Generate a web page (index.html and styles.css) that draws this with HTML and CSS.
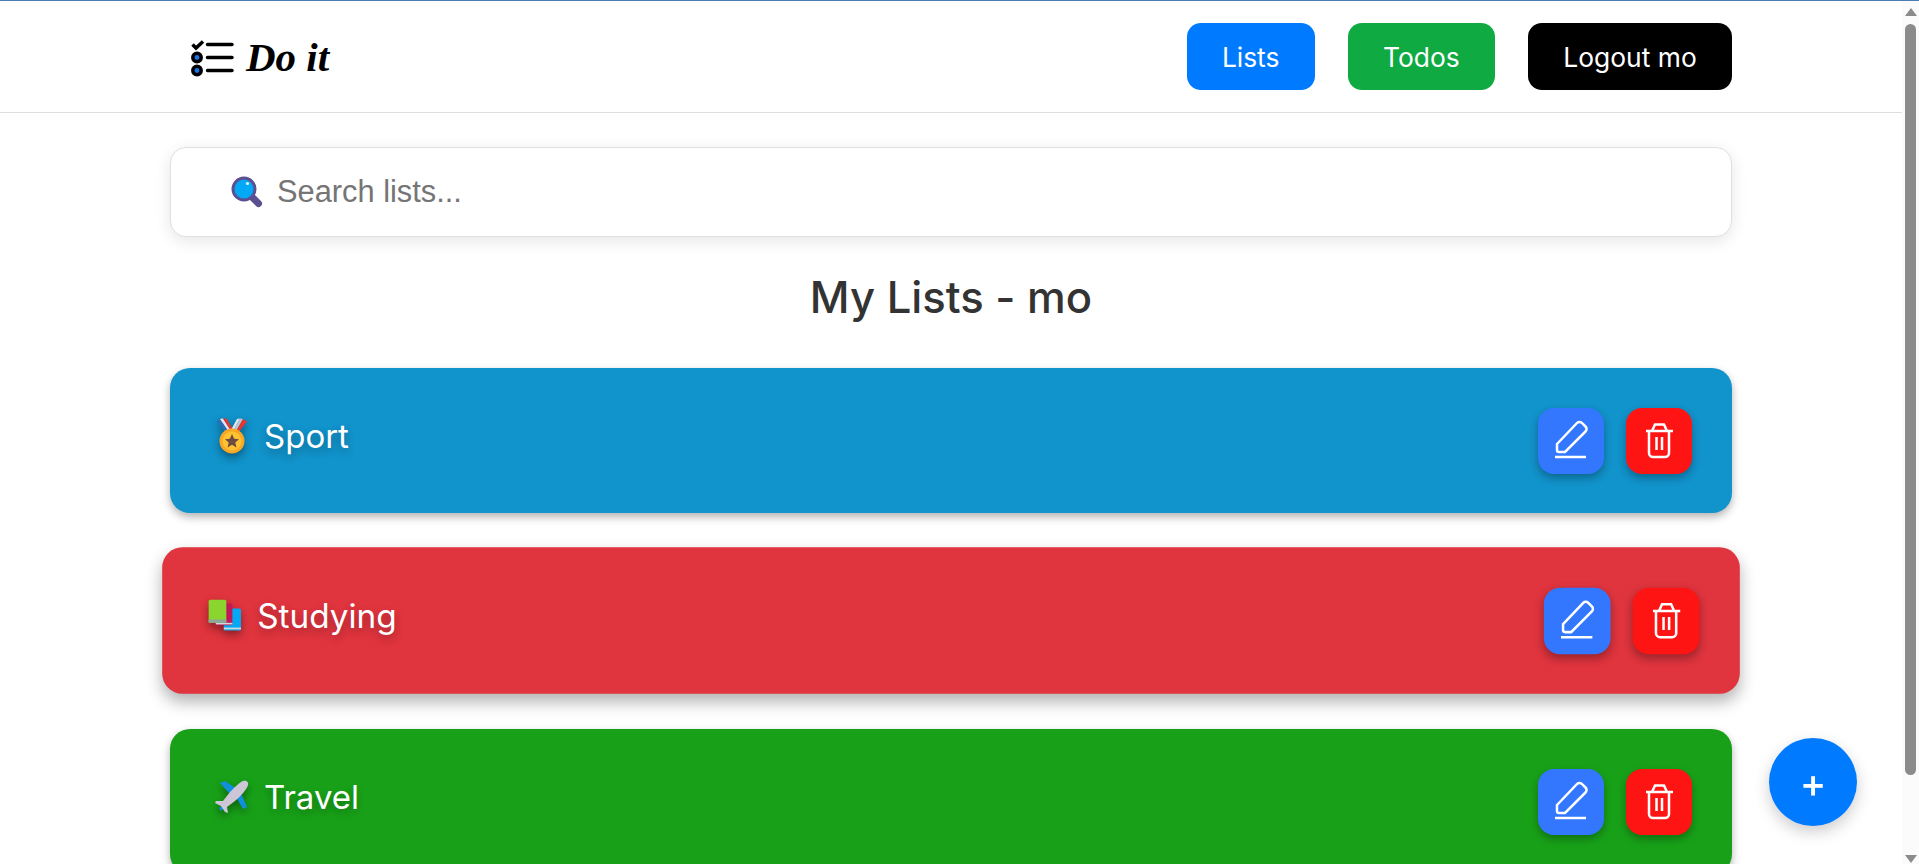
FILE: index.html
```html
<!DOCTYPE html>
<html lang="en">
<head>
<meta charset="utf-8">
<title>Do it</title>
<link rel="stylesheet" href="styles.css">
</head>
<body>
<div class="window">
  <div class="page">
    <nav class="nav">
      <div class="nav-inner">
        <div class="logo">
          <svg class="logo-icon" viewBox="0 0 42 36" aria-hidden="true">
            <path class="logo-check" d="M1.500 5.500 L5 9 L12 2.500"/>
            <path class="logo-line" d="M16.500 5.500H41M16.500 18.500H41M16.500 31.500H41"/>
            <circle class="logo-dot" cx="6" cy="18.500" r="4.200"/>
            <circle class="logo-dot" cx="6" cy="31.500" r="4.200"/>
          </svg>
          <span class="logo-text">Do it</span>
        </div>
        <div class="nav-links">
          <a class="nav-btn nav-lists">Lists</a>
          <a class="nav-btn nav-todos">Todos</a>
          <a class="nav-btn nav-logout">Logout mo</a>
        </div>
      </div>
    </nav>
    <main class="content">
      <div class="search">
        <svg class="search-icon" viewBox="0 0 32 32" aria-hidden="true">
          <path class="glass-handle" d="M20 20 L27.500 27.500"/>
          <circle class="glass-lens" cx="13" cy="13" r="11"/>
          <circle class="glass-shine" cx="16.500" cy="7.500" r="1.600"/>
        </svg>
        <input class="search-input" type="text" placeholder="Search lists...">
      </div>
      <h1 class="heading">My Lists - mo</h1>
      <section class="lists">
        <article class="card card-blue">
          <div class="card-title">
            <svg class="emoji" viewBox="-2 -0.500 34 36" aria-hidden="true">
              <path fill="#2b6cb8" d="M0 3 L3 0.500 L11 12 L8 13Z"/>
              <path fill="#e4e8ee" d="M3 0.500 L6 0 L13 11 L11 12Z"/>
              <path fill="#e8352e" d="M6 0 L9.500 0 L15.500 10 L13 11Z"/>
              <path fill="#e4e8ee" d="M20 0.500 L23 0 L17 11 L14.500 10.500Z"/>
              <path fill="#b9c6d6" d="M23 0 L26 0.500 L19.500 12 L17 11Z"/>
              <path fill="#e8352e" d="M26 0.500 L30 3 L22 13 L19.500 12Z"/>
              <circle cx="15" cy="22.500" r="12.500" fill="#f9a825"/>
              <circle cx="15" cy="22.500" r="9.500" fill="#ffc233"/>
              <path fill="#6d4c41" d="M15 15.500 L17.200 20.300 L22 20.700 L18.300 24 L19.500 29 L15 26.300 L10.500 29 L11.700 24 L8 20.700 L12.800 20.300Z"/>
            </svg>
            <span class="card-name">Sport</span>
          </div>
          <div class="card-actions">
            <button class="icon-btn edit" aria-label="Edit">
              <svg viewBox="0 0 66 66" aria-hidden="true"><path d="M19 36 L39 15 a3.500 3.500 0 0 1 5 0 l3.500 3.500 a3.500 3.500 0 0 1 0 5 L27 44 H21 a2 2 0 0 1 -2 -2Z M17 49 H48"/></svg>
            </button>
            <button class="icon-btn delete" aria-label="Delete">
              <svg viewBox="0 0 66 66" aria-hidden="true"><path d="M20 23 H47 M26 23 L29 16.500 H38 L41 23 M23 23 V45 a4 4 0 0 0 4 4 H39 a4 4 0 0 0 4 -4 V23 M30.500 29 V42 M36 29 V42"/></svg>
            </button>
          </div>
        </article>
        <article class="card card-red">
          <div class="card-title">
            <svg class="emoji" viewBox="0 -2 34 36" aria-hidden="true">
              <rect x="16" y="8.500" width="17" height="22" rx="1.500" fill="#03a9f4"/>
              <rect x="16" y="27.500" width="17" height="1.800" fill="#cfd8dc"/>
              <rect x="8" y="3.700" width="16.500" height="21.500" rx="1.500" fill="#c2185b"/>
              <rect x="8" y="22.800" width="16.500" height="1.600" fill="#cfd8dc"/>
              <rect x="1" y="0" width="17.500" height="22.700" rx="1.500" fill="#8bd52f"/>
              <rect x="1" y="19.500" width="17.500" height="3.200" fill="#90a4a0"/>
            </svg>
            <span class="card-name">Studying</span>
          </div>
          <div class="card-actions">
            <button class="icon-btn edit" aria-label="Edit">
              <svg viewBox="0 0 66 66" aria-hidden="true"><path d="M19 36 L39 15 a3.500 3.500 0 0 1 5 0 l3.500 3.500 a3.500 3.500 0 0 1 0 5 L27 44 H21 a2 2 0 0 1 -2 -2Z M17 49 H48"/></svg>
            </button>
            <button class="icon-btn delete" aria-label="Delete">
              <svg viewBox="0 0 66 66" aria-hidden="true"><path d="M20 23 H47 M26 23 L29 16.500 H38 L41 23 M23 23 V45 a4 4 0 0 0 4 4 H39 a4 4 0 0 0 4 -4 V23 M30.500 29 V42 M36 29 V42"/></svg>
            </button>
          </div>
        </article>
        <article class="card card-green">
          <div class="card-title">
            <svg class="emoji" viewBox="0 -1 34 36" aria-hidden="true">
              <path fill="#0f8fdc" d="M5 3 L10 1 L22 9 L15 14Z"/>
              <path fill="#0f8fdc" d="M20 15 L25 11 L32 27 L28 29Z"/>
              <path fill="#0f8fdc" d="M4 28 L9 24 L11 26 L6 31Z"/>
              <path fill="#ccc6d6" d="M28 1 C31 0 34 2 33 5 C32 9 26 16 20 21 L12 27 L13 33 L10 32 L6 26 L0 23 L1 21 L8 21 L15 12 C20 7 25 2 28 1Z"/>
            </svg>
            <span class="card-name">Travel</span>
          </div>
          <div class="card-actions">
            <button class="icon-btn edit" aria-label="Edit">
              <svg viewBox="0 0 66 66" aria-hidden="true"><path d="M19 36 L39 15 a3.500 3.500 0 0 1 5 0 l3.500 3.500 a3.500 3.500 0 0 1 0 5 L27 44 H21 a2 2 0 0 1 -2 -2Z M17 49 H48"/></svg>
            </button>
            <button class="icon-btn delete" aria-label="Delete">
              <svg viewBox="0 0 66 66" aria-hidden="true"><path d="M20 23 H47 M26 23 L29 16.500 H38 L41 23 M23 23 V45 a4 4 0 0 0 4 4 H39 a4 4 0 0 0 4 -4 V23 M30.500 29 V42 M36 29 V42"/></svg>
            </button>
          </div>
        </article>
      </section>
    </main>
  </div>
  <aside class="scrollbar" aria-hidden="true">
    <span class="arrow-up"></span>
    <span class="thumb"></span>
    <span class="arrow-down"></span>
  </aside>
</div>
<button class="fab" aria-label="Add list">+</button>
</body>
</html>
```

FILE: styles.css
```css
* { box-sizing: border-box; }

html, body {
  margin: 0;
  height: 100%;
  overflow: hidden;
  background: #fff;
  font-family: Inter, "Liberation Sans", sans-serif;
}

.window {
  display: flex;
  height: 864px;
  border-top: 1px solid #4a7db5;
}

.page {
  flex: 1;
  min-width: 0;
  overflow: hidden;
}

.nav {
  height: 112px;
  border-bottom: 1px solid #dedede;
}

.nav-inner {
  max-width: 1562px;
  height: 100%;
  margin: 0 auto;
  padding-left: 21px;
  display: flex;
  align-items: center;
  justify-content: space-between;
}

.logo {
  display: flex;
  align-items: center;
  gap: 13px;
}

.logo-icon {
  width: 42px;
  height: 36px;
  overflow: visible;
}

.logo-check {
  fill: none;
  stroke: #000;
  stroke-width: 3.500;
}

.logo-line {
  fill: none;
  stroke: #000;
  stroke-width: 3.500;
  stroke-linecap: round;
}

.logo-dot {
  fill: #1a73e8;
  stroke: #000;
  stroke-width: 3.500;
}

.logo-text {
  font-family: "Liberation Serif", serif;
  font-style: italic;
  font-weight: 700;
  font-size: 41px;
  color: #000;
}

.nav-links {
  display: flex;
  gap: 33px;
}

.nav-btn {
  height: 67px;
  padding: 0 35.300px;
  display: flex;
  align-items: center;
  border-radius: 14px;
  color: #fff;
  font-size: 26.400px;
}

.nav-lists { background: #007bff; }
.nav-todos { background: #0faa42; }
.nav-logout { background: #000; }

.content {
  max-width: 1562px;
  margin: 0 auto;
  padding-top: 34px;
}

.search {
  height: 90px;
  padding-left: 60px;
  display: flex;
  align-items: center;
  gap: 12px;
  background: #fff;
  border: 1px solid #e0e0e0;
  border-radius: 16px;
  box-shadow: 0 4px 16px rgba(0, 0, 0, 0.1);
}

.search-icon {
  width: 32px;
  height: 32px;
  flex: none;
}

.glass-handle {
  stroke: #5c4f92;
  stroke-width: 7;
  stroke-linecap: round;
}

.glass-lens {
  fill: #03a9f4;
  stroke: #5c4f92;
  stroke-width: 3;
}

.glass-shine { fill: #e6f7ff; }

.search-input {
  flex: 1;
  min-width: 0;
  border: 0;
  outline: 0;
  background: transparent;
  font-family: "Liberation Sans", sans-serif;
  font-size: 30.800px;
}

.search-input::placeholder { color: #757575; }

.heading {
  margin: 31px 0 41px;
  text-align: center;
  font-size: 43.600px;
  line-height: 59px;
  font-weight: 500;
  color: #333;
}

.lists {
  display: flex;
  flex-direction: column;
  gap: 35.500px;
}

.card {
  height: 145px;
  flex: none;
  padding: 0 40px;
  display: flex;
  align-items: center;
  justify-content: space-between;
  border-radius: 20px;
  color: #fff;
  box-shadow: 0 4px 8px rgba(0, 0, 0, 0.3);
}

.card-blue { background: #1193cb; }
.card-green { background: #18a118; }

.card-red {
  background: #e0343e;
  transform: translateY(-1px) scale(1.01);
  box-shadow: 0 8px 16px rgba(0, 0, 0, 0.3);
}

.card-title {
  display: flex;
  align-items: center;
  gap: 15px;
  padding-bottom: 10px;
}

.emoji {
  width: 34px;
  height: 36px;
  flex: none;
  margin-left: 5px;
  filter: drop-shadow(0 4px 4px rgba(0, 0, 0, 0.4));
}

.card-name {
  font-size: 33px;
  line-height: 44px;
  text-shadow: 0 4px 8px rgba(0, 0, 0, 0.3);
}

.card-actions {
  display: flex;
  gap: 22px;
}

.icon-btn {
  width: 66px;
  height: 66px;
  padding: 0;
  border: 0;
  border-radius: 16px;
  box-shadow: 0 4px 8px rgba(0, 0, 0, 0.3);
}

.icon-btn svg {
  display: block;
  width: 66px;
  height: 66px;
  fill: none;
  stroke: #fff;
  stroke-width: 2.500;
}

.edit { background: #3377ff; }
.delete { background: #ff1414; }

.scrollbar {
  position: relative;
  width: 17px;
  flex: none;
  display: flex;
  flex-direction: column;
  align-items: center;
  background: #fbfbfb;
}

.arrow-up {
  margin-top: 7px;
  border: solid transparent;
  border-width: 0 6px 8px;
  border-bottom-color: #8b8b8b;
}

.thumb {
  width: 11px;
  height: 751px;
  margin-top: 8px;
  border-radius: 6px;
  background: #8b8b8b;
}

.arrow-down {
  margin-top: 80px;
  border: solid transparent;
  border-width: 8px 6px 0;
  border-top-color: #8b8b8b;
}

.fab {
  position: fixed;
  right: 62px;
  bottom: 38px;
  width: 88px;
  height: 88px;
  padding: 2px 0 0;
  border: 0;
  border-radius: 50%;
  background: #007bff;
  color: #fff;
  font-family: Inter, sans-serif;
  font-size: 40px;
  font-weight: 500;
  line-height: 86px;
  box-shadow: 0 6px 16px rgba(0, 0, 0, 0.2);
}
```
